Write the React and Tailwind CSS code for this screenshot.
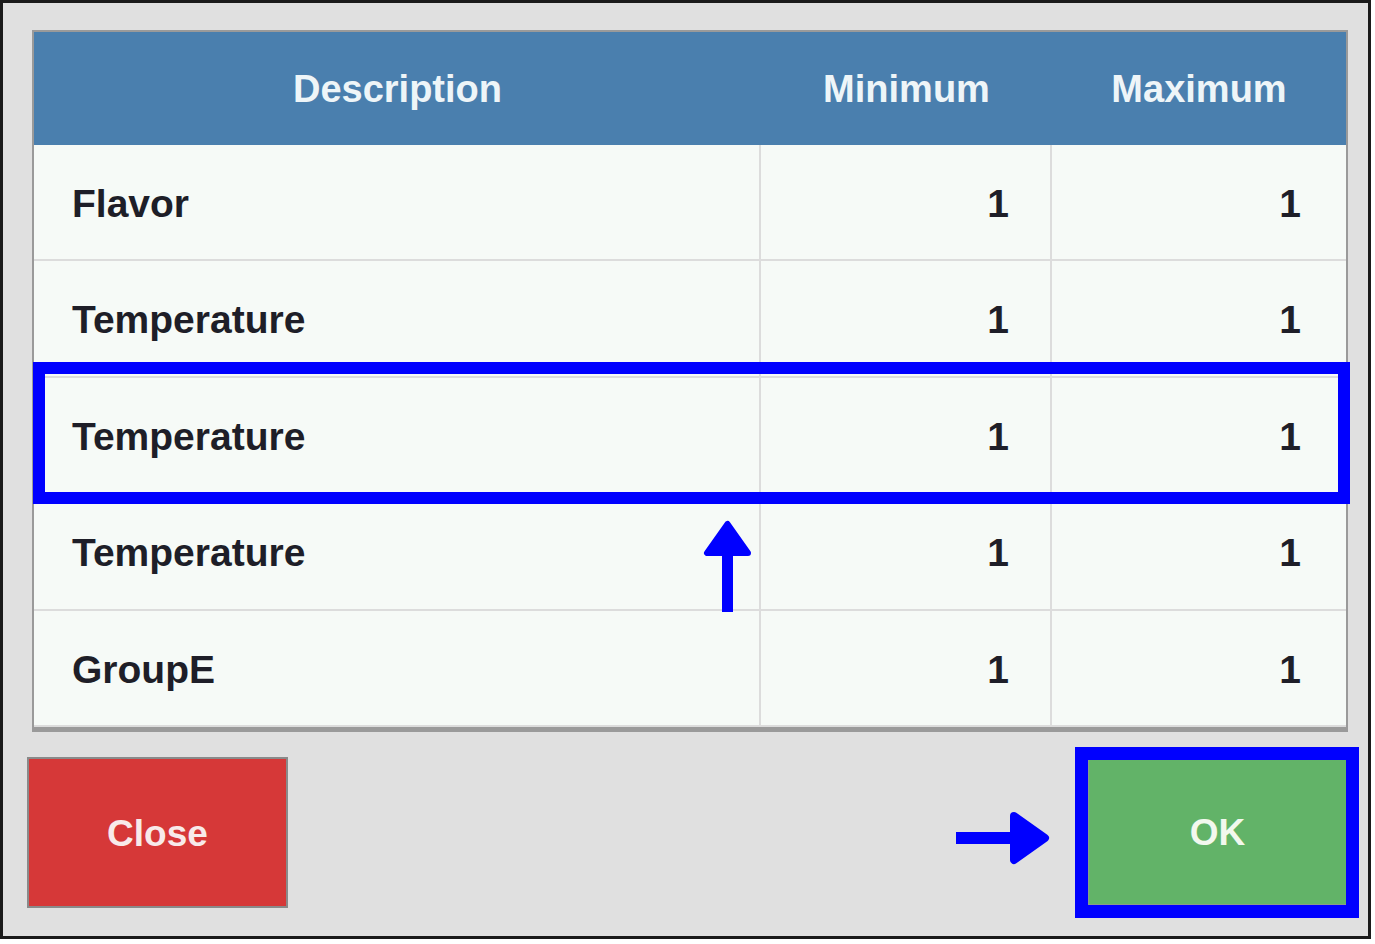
import React from "react";

const rows = [
  { id: 1, name: "Flavor", min: 1, max: 1 },
  { id: 2, name: "Temperature", min: 1, max: 1 },
  { id: 3, name: "Temperature", min: 1, max: 1 },
  { id: 4, name: "Temperature", min: 1, max: 1 },
  { id: 5, name: "GroupE", min: 1, max: 1 },
];

const App = () => {
  return (
    <div className="bg-white w-[1375px] h-[944px]" style={{ fontFamily: '"Liberation Sans", Arial, sans-serif' }}>
      <div className="relative w-[1371px] h-[939px] bg-[#e0e0e0] border-[3px] border-[#1a1a1a]">
        {/* table */}
        <div className="ml-[29px] mt-[27px] w-[1316px] border-2 border-[#9a9a9a] border-b-[5px] bg-[#f6faf7]">
          <div className="grid grid-cols-[727px_291px_1fr] h-[113px] bg-[#4a7fae] text-[38px] font-bold text-[#eef5f8]">
            <div className="flex items-center justify-center pt-[2px]">Description</div>
            <div className="flex items-center justify-center pt-[2px]">Minimum</div>
            <div className="flex items-center justify-center pt-[2px]">Maximum</div>
          </div>
          {rows.map((row) => (
            <div
              key={row.id}
              className="grid grid-cols-[727px_291px_1fr] h-[116.4px] border-b-2 border-[#dcdcdc] text-[39px] font-bold text-[#1e1e28]"
            >
              <div className="flex items-center pl-[38px] pt-[4px] border-r-2 border-[#dcdcdc]">{row.name}</div>
              <div className="flex items-center justify-end pr-[41px] pt-[4px] border-r-2 border-[#dcdcdc]">{row.min}</div>
              <div className="flex items-center justify-end pr-[45px] pt-[4px]">{row.max}</div>
            </div>
          ))}
        </div>

        {/* buttons */}
        <div className="flex justify-between pl-[24px] pr-[20px] mt-[25px]">
          <button className="w-[261px] h-[151px] pt-[2px] bg-[#d63838] border-2 border-[#8a8a8a] text-[37px] font-bold text-[#f8eaea]">
            Close
          </button>
          <button className="w-[261px] h-[148px] mt-[1px] pt-[2px] bg-[#62b368] border-2 border-[#8a9a8a] text-[37px] font-bold text-[#f2f8ee]">
            OK
          </button>
        </div>

        {/* annotations */}
        <div className="absolute left-[30px] top-[359px] w-[1317px] h-[142px] border-[12px] border-[#0000ff]" />
        <div className="absolute left-[1072px] top-[744px] w-[284px] h-[171px] border-[13px] border-[#0000ff]" />
        <svg className="absolute left-[947px] top-[802px]" width="110" height="70" viewBox="0 0 110 70">
          <rect x="6" y="27" width="58" height="12" fill="#0000ff" />
          <polygon points="64,11 95,33 64,55" fill="#0000ff" stroke="#0000ff" strokeWidth="8" strokeLinejoin="round" />
        </svg>
        <svg className="absolute left-[697px] top-[512px]" width="60" height="110" viewBox="0 0 60 110">
          <rect x="22" y="40" width="11" height="57" fill="#0000ff" />
          <polygon points="27.5,9 7,38 48,38" fill="#0000ff" stroke="#0000ff" strokeWidth="6" strokeLinejoin="round" />
        </svg>
      </div>
    </div>
  );
};

export default App;
